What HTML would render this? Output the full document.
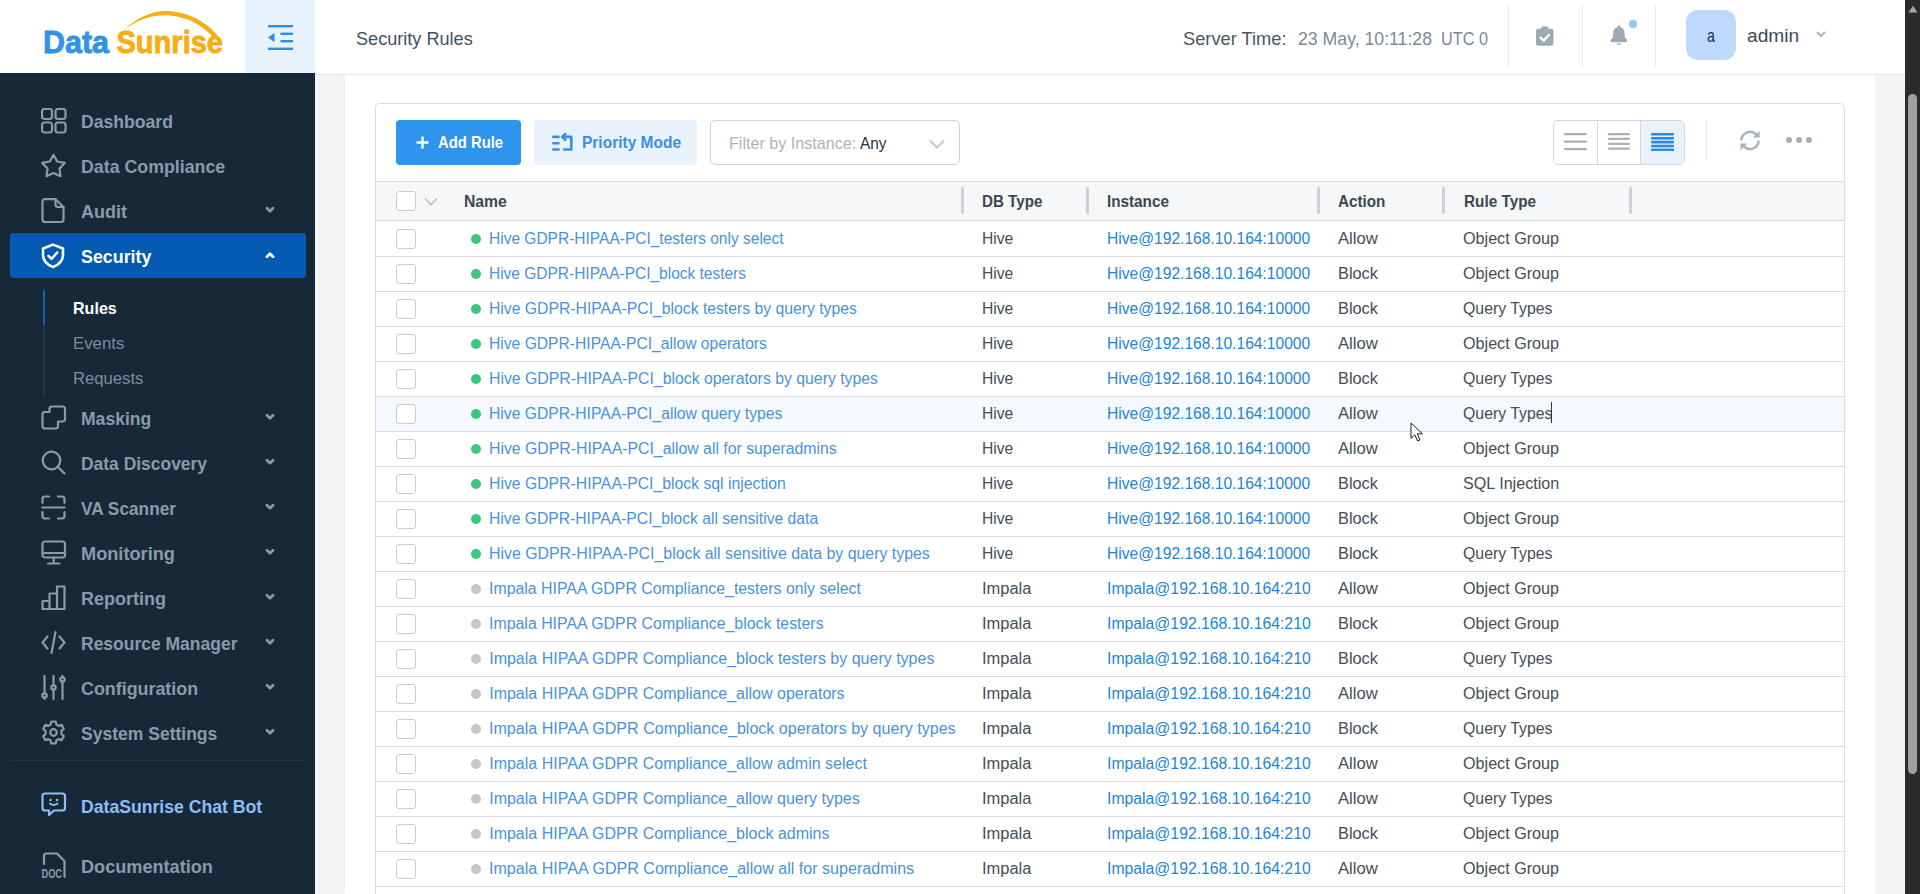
<!DOCTYPE html><html><head><meta charset="utf-8"><style>
*{box-sizing:border-box;margin:0;padding:0}
html,body{width:1920px;height:894px;overflow:hidden;background:#f3f5f7;font-family:"Liberation Sans", sans-serif}
.a{position:absolute;white-space:nowrap}
.cb{position:absolute;left:396px;width:20px;height:20px;border:1px solid #cbcbcb;border-radius:3px;background:#fff}
.dot{position:absolute;left:471px;width:10px;height:10px;border-radius:50%}
.ln{position:absolute;left:376px;width:1468px;height:1px;background:#d8dce2}
</style></head><body>
<div class="a" style="left:345px;top:74px;width:1530px;height:820px;background:#fff;box-shadow:-1px 0 3px rgba(0,0,0,0.04)"></div>
<div class="a" style="left:0;top:0;width:1905px;height:74px;background:#fff"></div>
<div class="a" style="left:315px;top:74px;width:1590px;height:1px;background:#e3e6e9"></div>
<svg style="position:absolute;left:30px;top:0px" width="240" height="73" viewBox="0 0 240 73" >
<text x="13" y="52.8" font-family="Liberation Sans" font-weight="bold" font-size="31.5" fill="#3192e6" stroke="#3192e6" stroke-width="0.9" textLength="66" lengthAdjust="spacingAndGlyphs">Data</text>
<text x="86.5" y="52.8" font-family="Liberation Sans" font-weight="bold" font-size="31.5" fill="#f9ad12" stroke="#f9ad12" stroke-width="0.9" textLength="106.5" lengthAdjust="spacingAndGlyphs">Sunrise</text>
<path d="M93.4 30.7 C 104 20, 120 11, 134.7 11 C 155 11, 175 20, 187.5 35.5 L 184.5 38.5 C 173 25, 155 15.2, 134.7 15.2 C 120 15.2, 105 21, 93.4 30.7 Z" fill="#f9ad12"/>
</svg>
<div class="a" style="left:245px;top:0;width:70px;height:73px;background:#e8f2fc"></div>
<svg style="position:absolute;left:268px;top:25px" width="25" height="25" viewBox="0 0 25 25" >
<rect x="0" y="0" width="25" height="2.4" fill="#2f8fe6"/>
<rect x="12.5" y="7.6" width="12.5" height="2.4" fill="#2f8fe6"/>
<rect x="12.5" y="15" width="12.5" height="2.4" fill="#2f8fe6"/>
<rect x="0" y="22.6" width="25" height="2.4" fill="#2f8fe6"/>
<path d="M0 12.5 L6.5 7.8 L6.5 17.2 Z" fill="#2f8fe6"/>
</svg>
<div class="a " style="left:355.80px;top:28.91px;font-size:19px;line-height:19px;color:#3f5163;transform:scaleX(0.9530);transform-origin:0 0;">Security Rules</div>
<div class="a " style="left:1182.90px;top:28.91px;font-size:19px;line-height:19px;color:#4b5763;transform:scaleX(0.9617);transform-origin:0 0;">Server Time:</div>
<div class="a " style="left:1298.00px;top:28.91px;font-size:19px;line-height:19px;color:#7d8996;transform:scaleX(0.9304);transform-origin:0 0;">23 May, 10:11:28</div>
<div class="a " style="left:1441.20px;top:28.91px;font-size:19px;line-height:19px;color:#7d8996;transform:scaleX(0.8559);transform-origin:0 0;">UTC 0</div>
<div class="a" style="left:1508px;top:4px;width:1px;height:64px;background:#e9ebee"></div>
<div class="a" style="left:1582px;top:4px;width:1px;height:64px;background:#e9ebee"></div>
<div class="a" style="left:1655px;top:4px;width:1px;height:64px;background:#e9ebee"></div>
<svg style="position:absolute;left:1536px;top:26px" width="18" height="20" viewBox="0 0 18 20" >
<rect x="0" y="2.8" width="17.5" height="17" rx="2.3" fill="#9ea9b4"/>
<rect x="5.2" y="0.2" width="7.2" height="5" rx="2.2" fill="#9ea9b4"/>
<path d="M4.6 11.6 L7.6 14.6 L12.9 9" fill="none" stroke="#fff" stroke-width="2.3" stroke-linecap="round" stroke-linejoin="round"/>
</svg>
<svg style="position:absolute;left:1610px;top:25px" width="18" height="21" viewBox="0 0 18 21" >
<circle cx="8.9" cy="1.6" r="1.4" fill="#9ea9b4"/>
<path d="M8.9 2 C 4.8 2, 3.3 5.2, 3.2 8.5 L 3 12 C 2.8 13.5, 0.5 14.2, 0.5 15.5 C 0.5 16.8, 1.5 17.2, 2.5 17.2 L 15.3 17.2 C 16.3 17.2, 17.3 16.8, 17.3 15.5 C 17.3 14.2, 15 13.5, 14.8 12 L 14.6 8.5 C 14.5 5.2, 13 2, 8.9 2 Z" fill="#9ea9b4"/>
<path d="M6.3 18.4 L11.5 18.4 Q 8.9 21.8 6.3 18.4 Z" fill="#9ea9b4"/>
</svg>
<div class="a" style="left:1629px;top:20px;width:8px;height:8px;border-radius:50%;background:#8ec6f7"></div>
<div class="a" style="left:1686px;top:10px;width:50px;height:50px;border-radius:12px;background:#bed9fc"></div>
<div class="a " style="left:1707.20px;top:25.91px;font-size:19px;line-height:19px;color:#152f52;transform:scaleX(0.7519);transform-origin:0 0;">a</div>
<div class="a " style="left:1747.00px;top:25.91px;font-size:19px;line-height:19px;color:#3a4a5a;transform:scaleX(1.0101);transform-origin:0 0;">admin</div>
<svg style="position:absolute;left:1816px;top:31px" width="10" height="7" viewBox="0 0 10 7" ><path d="M1 1 L5 5 L9 1" fill="none" stroke="#a9b3bd" stroke-width="2"/></svg>
<div class="a" style="left:0;top:73px;width:315px;height:821px;background:#172839"></div>
<svg style="position:absolute;left:40.5px;top:108px" width="26" height="26" viewBox="0 0 26 26" ><rect x="1" y="1" width="10" height="10" rx="2.5" fill="none" stroke="#8a9bab" stroke-width="2.2" stroke-linecap="round" stroke-linejoin="round"/><rect x="14.5" y="1" width="10" height="10" rx="2.5" fill="none" stroke="#8a9bab" stroke-width="2.2" stroke-linecap="round" stroke-linejoin="round"/><rect x="1" y="14.5" width="10" height="10" rx="2.5" fill="none" stroke="#8a9bab" stroke-width="2.2" stroke-linecap="round" stroke-linejoin="round"/><rect x="14.5" y="14.5" width="10" height="10" rx="2.5" fill="none" stroke="#8a9bab" stroke-width="2.2" stroke-linecap="round" stroke-linejoin="round"/></svg>
<div class="a " style="left:80.70px;top:111.91px;font-size:19px;line-height:19px;color:#8a9bab;font-weight:bold;transform:scaleX(0.9267);transform-origin:0 0;">Dashboard</div>
<svg style="position:absolute;left:40.5px;top:153px" width="26" height="26" viewBox="0 0 26 26" ><path d="M12.50 1.80 L16.20 8.50 L23.72 9.95 L18.49 15.55 L19.44 23.15 L12.50 19.90 L5.56 23.15 L6.51 15.55 L1.28 9.95 L8.80 8.50 Z" fill="none" stroke="#8a9bab" stroke-width="2.2" stroke-linecap="round" stroke-linejoin="round"/></svg>
<div class="a " style="left:80.70px;top:156.91px;font-size:19px;line-height:19px;color:#8a9bab;font-weight:bold;transform:scaleX(0.9352);transform-origin:0 0;">Data Compliance</div>
<svg style="position:absolute;left:40.5px;top:198px" width="26" height="26" viewBox="0 0 26 26" ><path d="M4 1.2 L14.5 1.2 L22.5 9 L22.5 21.5 Q22.5 24 20 24 L4 24 Q1.5 24 1.5 21.5 L1.5 3.7 Q1.5 1.2 4 1.2 Z" fill="none" stroke="#8a9bab" stroke-width="2.2" stroke-linecap="round" stroke-linejoin="round"/><path d="M14.5 1.2 L14.5 6.5 Q14.5 9 17 9 L22.5 9" fill="none" stroke="#8a9bab" stroke-width="2.2" stroke-linecap="round" stroke-linejoin="round"/></svg>
<div class="a " style="left:80.70px;top:201.91px;font-size:19px;line-height:19px;color:#8a9bab;font-weight:bold;transform:scaleX(0.9455);transform-origin:0 0;">Audit</div>
<svg style="position:absolute;left:265px;top:206px" width="10" height="8" viewBox="0 0 10 8" ><path d="M2 2.2 L5 5.2 L8 2.2" fill="none" stroke="#8a9bab" stroke-width="2.8" stroke-linecap="round" stroke-linejoin="round"/></svg>
<div class="a" style="left:10px;top:233px;width:296px;height:45px;background:#025bb0;border-radius:3px"></div>
<svg style="position:absolute;left:41.3px;top:243px" width="24" height="26" viewBox="0 0 24 26" ><path d="M12 1.6 L22 5.5 L22 12 Q22 20 12 24 Q2 20 2 12 L2 5.5 Z" fill="none" stroke="#fff" stroke-width="2.5" stroke-linejoin="round"/><path d="M7.5 12.8 L10.6 15.8 L16.2 9.5" fill="none" stroke="#fff" stroke-width="2.5" stroke-linecap="round" stroke-linejoin="round"/></svg>
<div class="a " style="left:80.80px;top:246.91px;font-size:19px;line-height:19px;color:#fff;font-weight:bold;transform:scaleX(0.9392);transform-origin:0 0;">Security</div>
<svg style="position:absolute;left:265px;top:251px" width="10" height="8" viewBox="0 0 10 8" ><path d="M2 5.8 L5 2.8 L8 5.8" fill="none" stroke="#fff" stroke-width="2.8" stroke-linecap="round" stroke-linejoin="round"/></svg>
<div class="a" style="left:43px;top:290px;width:2px;height:106px;background:#24384b"></div>
<div class="a" style="left:43px;top:290px;width:2px;height:35px;background:#1661ad"></div>
<div class="a " style="left:73.20px;top:299.60px;font-size:17px;line-height:17px;color:#fff;font-weight:bold;transform:scaleX(0.9455);transform-origin:0 0;">Rules</div>
<div class="a " style="left:73.20px;top:334.60px;font-size:17px;line-height:17px;color:#7d8e9f;transform:scaleX(0.9878);transform-origin:0 0;">Events</div>
<div class="a " style="left:73.20px;top:369.60px;font-size:17px;line-height:17px;color:#7d8e9f;transform:scaleX(0.9802);transform-origin:0 0;">Requests</div>
<svg style="position:absolute;left:40.5px;top:405px" width="26" height="26" viewBox="0 0 26 26" ><path d="M8.5 7 L8.5 4 Q8.5 1.5 11 1.5 L21.5 1.5 Q24 1.5 24 4 L24 14 Q24 16.5 21.5 16.5 L17 16.5 L17 21 Q17 23.5 14.5 23.5 L4 23.5 Q1.5 23.5 1.5 21 L1.5 9.5 Q1.5 7 4 7 Z" fill="none" stroke="#8a9bab" stroke-width="2.2" stroke-linecap="round" stroke-linejoin="round"/></svg>
<div class="a " style="left:80.70px;top:408.91px;font-size:19px;line-height:19px;color:#8a9bab;font-weight:bold;transform:scaleX(0.9237);transform-origin:0 0;">Masking</div>
<svg style="position:absolute;left:265px;top:413px" width="10" height="8" viewBox="0 0 10 8" ><path d="M2 2.2 L5 5.2 L8 2.2" fill="none" stroke="#8a9bab" stroke-width="2.8" stroke-linecap="round" stroke-linejoin="round"/></svg>
<svg style="position:absolute;left:40.5px;top:450px" width="26" height="26" viewBox="0 0 26 26" ><circle cx="10.5" cy="10.5" r="8.8" fill="none" stroke="#8a9bab" stroke-width="2.2" stroke-linecap="round" stroke-linejoin="round"/><path d="M17 17 L23.5 23.5" fill="none" stroke="#8a9bab" stroke-width="2.2" stroke-linecap="round" stroke-linejoin="round"/></svg>
<div class="a " style="left:80.70px;top:453.91px;font-size:19px;line-height:19px;color:#8a9bab;font-weight:bold;transform:scaleX(0.9179);transform-origin:0 0;">Data Discovery</div>
<svg style="position:absolute;left:265px;top:458px" width="10" height="8" viewBox="0 0 10 8" ><path d="M2 2.2 L5 5.2 L8 2.2" fill="none" stroke="#8a9bab" stroke-width="2.8" stroke-linecap="round" stroke-linejoin="round"/></svg>
<svg style="position:absolute;left:40.5px;top:495px" width="26" height="26" viewBox="0 0 26 26" ><path d="M1.5 8 L1.5 4 Q1.5 1.5 4 1.5 L8 1.5 M17 1.5 L21 1.5 Q23.5 1.5 23.5 4 L23.5 8 M23.5 17 L23.5 21 Q23.5 23.5 21 23.5 L17 23.5 M8 23.5 L4 23.5 Q1.5 23.5 1.5 21 L1.5 17 M1.5 12.5 L23.5 12.5" fill="none" stroke="#8a9bab" stroke-width="2.2" stroke-linecap="round" stroke-linejoin="round"/></svg>
<div class="a " style="left:80.70px;top:498.91px;font-size:19px;line-height:19px;color:#8a9bab;font-weight:bold;transform:scaleX(0.9091);transform-origin:0 0;">VA Scanner</div>
<svg style="position:absolute;left:265px;top:503px" width="10" height="8" viewBox="0 0 10 8" ><path d="M2 2.2 L5 5.2 L8 2.2" fill="none" stroke="#8a9bab" stroke-width="2.8" stroke-linecap="round" stroke-linejoin="round"/></svg>
<svg style="position:absolute;left:40.5px;top:540px" width="26" height="26" viewBox="0 0 26 26" ><rect x="1.5" y="1.5" width="22.5" height="16" rx="2.5" fill="none" stroke="#8a9bab" stroke-width="2.2" stroke-linecap="round" stroke-linejoin="round"/><path d="M1.5 13 L24 13 M12.7 17.5 L12.7 23 M7 23.5 L18.5 23.5" fill="none" stroke="#8a9bab" stroke-width="2.2" stroke-linecap="round" stroke-linejoin="round"/></svg>
<div class="a " style="left:80.70px;top:543.91px;font-size:19px;line-height:19px;color:#8a9bab;font-weight:bold;transform:scaleX(0.9568);transform-origin:0 0;">Monitoring</div>
<svg style="position:absolute;left:265px;top:548px" width="10" height="8" viewBox="0 0 10 8" ><path d="M2 2.2 L5 5.2 L8 2.2" fill="none" stroke="#8a9bab" stroke-width="2.8" stroke-linecap="round" stroke-linejoin="round"/></svg>
<svg style="position:absolute;left:40.5px;top:585px" width="26" height="26" viewBox="0 0 26 26" ><path d="M1.5 24 L1.5 16 L8.5 16 L8.5 24 Z M8.5 24 L8.5 8.5 L16 8.5 L16 24 M16 24 L16 1.5 L23.5 1.5 L23.5 24 L1.5 24" fill="none" stroke="#8a9bab" stroke-width="2.2" stroke-linecap="round" stroke-linejoin="round"/></svg>
<div class="a " style="left:80.70px;top:588.91px;font-size:19px;line-height:19px;color:#8a9bab;font-weight:bold;transform:scaleX(0.9467);transform-origin:0 0;">Reporting</div>
<svg style="position:absolute;left:265px;top:593px" width="10" height="8" viewBox="0 0 10 8" ><path d="M2 2.2 L5 5.2 L8 2.2" fill="none" stroke="#8a9bab" stroke-width="2.8" stroke-linecap="round" stroke-linejoin="round"/></svg>
<svg style="position:absolute;left:40.5px;top:630px" width="26" height="26" viewBox="0 0 26 26" ><path d="M6.5 6.5 L1.5 12.5 L6.5 18.5 M18.5 6.5 L23.5 12.5 L18.5 18.5 M14.5 2 L10.5 23" fill="none" stroke="#8a9bab" stroke-width="2.2" stroke-linecap="round" stroke-linejoin="round"/></svg>
<div class="a " style="left:80.70px;top:633.91px;font-size:19px;line-height:19px;color:#8a9bab;font-weight:bold;transform:scaleX(0.9203);transform-origin:0 0;">Resource Manager</div>
<svg style="position:absolute;left:265px;top:638px" width="10" height="8" viewBox="0 0 10 8" ><path d="M2 2.2 L5 5.2 L8 2.2" fill="none" stroke="#8a9bab" stroke-width="2.8" stroke-linecap="round" stroke-linejoin="round"/></svg>
<svg style="position:absolute;left:40.5px;top:675px" width="26" height="26" viewBox="0 0 26 26" ><path d="M3.5 1 L3.5 18.5 M3.5 22.5 L3.5 24 M12.5 1 L12.5 10.5 M12.5 14.5 L12.5 24 M21.5 1 L21.5 2.5 M21.5 6.5 L21.5 24" fill="none" stroke="#8a9bab" stroke-width="2.2" stroke-linecap="round" stroke-linejoin="round"/><circle cx="3.5" cy="20.5" r="2.2" fill="none" stroke="#8a9bab" stroke-width="2.2" stroke-linecap="round" stroke-linejoin="round"/><circle cx="12.5" cy="12.5" r="2.2" fill="none" stroke="#8a9bab" stroke-width="2.2" stroke-linecap="round" stroke-linejoin="round"/><circle cx="21.5" cy="4.5" r="2.2" fill="none" stroke="#8a9bab" stroke-width="2.2" stroke-linecap="round" stroke-linejoin="round"/></svg>
<div class="a " style="left:80.70px;top:678.91px;font-size:19px;line-height:19px;color:#8a9bab;font-weight:bold;transform:scaleX(0.9402);transform-origin:0 0;">Configuration</div>
<svg style="position:absolute;left:265px;top:683px" width="10" height="8" viewBox="0 0 10 8" ><path d="M2 2.2 L5 5.2 L8 2.2" fill="none" stroke="#8a9bab" stroke-width="2.8" stroke-linecap="round" stroke-linejoin="round"/></svg>
<svg style="position:absolute;left:40.5px;top:720px" width="26" height="26" viewBox="0 0 26 26" ><path d="M10.3 1.5 L14.7 1.5 L15.4 4.6 L17.6 5.9 L20.6 4.9 L22.8 8.7 L20.5 10.9 L20.5 14.1 L22.8 16.3 L20.6 20.1 L17.6 19.1 L15.4 20.4 L14.7 23.5 L10.3 23.5 L9.6 20.4 L7.4 19.1 L4.4 20.1 L2.2 16.3 L4.5 14.1 L4.5 10.9 L2.2 8.7 L4.4 4.9 L7.4 5.9 L9.6 4.6 Z" fill="none" stroke="#8a9bab" stroke-width="2.2" stroke-linecap="round" stroke-linejoin="round"/><circle cx="12.5" cy="12.5" r="3.3" fill="none" stroke="#8a9bab" stroke-width="2.2" stroke-linecap="round" stroke-linejoin="round"/></svg>
<div class="a " style="left:80.70px;top:723.91px;font-size:19px;line-height:19px;color:#8a9bab;font-weight:bold;transform:scaleX(0.9221);transform-origin:0 0;">System Settings</div>
<svg style="position:absolute;left:265px;top:728px" width="10" height="8" viewBox="0 0 10 8" ><path d="M2 2.2 L5 5.2 L8 2.2" fill="none" stroke="#8a9bab" stroke-width="2.8" stroke-linecap="round" stroke-linejoin="round"/></svg>
<div class="a" style="left:10px;top:760px;width:295px;height:1px;background:#25384b"></div>
<svg style="position:absolute;left:40.5px;top:792px" width="26" height="26" viewBox="0 0 26 26" ><path d="M4 1.5 L21.5 1.5 Q24 1.5 24 4 L24 16 Q24 18.5 21.5 18.5 L13 18.5 L8 23 L8 18.5 L4 18.5 Q1.5 18.5 1.5 16 L1.5 4 Q1.5 1.5 4 1.5 Z" fill="none" stroke="#8fbdf5" stroke-width="2.2" stroke-linejoin="round"/><circle cx="9.5" cy="8" r="1.2" fill="#8fbdf5"/><circle cx="16" cy="8" r="1.2" fill="#8fbdf5"/><path d="M9 11.5 Q12.7 14.5 16.5 11.5" fill="none" stroke="#8fbdf5" stroke-width="1.8" stroke-linecap="round"/></svg>
<div class="a " style="left:80.70px;top:796.91px;font-size:19px;line-height:19px;color:#8fbdf5;font-weight:bold;transform:scaleX(0.9277);transform-origin:0 0;">DataSunrise Chat Bot</div>
<svg style="position:absolute;left:40.5px;top:852px" width="26" height="27" viewBox="0 0 26 27" ><path d="M3 12 L3 4 Q3 1.5 5.5 1.5 L16 1.5 L23.5 9 L23.5 25" fill="none" stroke="#8a9bab" stroke-width="2.2" stroke-linecap="round" stroke-linejoin="round"/><text x="0.5" y="25.5" font-family="Liberation Sans" font-weight="bold" font-size="12" fill="#8a9bab" textLength="20.5" lengthAdjust="spacingAndGlyphs">DOC</text></svg>
<div class="a " style="left:80.70px;top:856.91px;font-size:19px;line-height:19px;color:#8a9bab;font-weight:bold;transform:scaleX(0.9536);transform-origin:0 0;">Documentation</div>
<div class="a" style="left:375px;top:103px;width:1470px;height:900px;border:1px solid #dadde1;border-radius:5px;background:#fff"></div>
<div class="a" style="left:396px;top:120px;width:125px;height:45px;background:#2f94ee;border-radius:4px"></div>
<svg style="position:absolute;left:415.5px;top:135.5px" width="14" height="14" viewBox="0 0 14 14" ><path d="M6.5 0.5 L6.5 12.5 M0.5 6.5 L12.5 6.5" stroke="#fff" stroke-width="2.4"/></svg>
<div class="a " style="left:437.90px;top:133.60px;font-size:17px;line-height:17px;color:#fff;font-weight:bold;transform:scaleX(0.8723);transform-origin:0 0;">Add Rule</div>
<div class="a" style="left:534px;top:120px;width:163px;height:45px;background:#e8f2fc;border-radius:4px"></div>
<svg style="position:absolute;left:551.5px;top:133px" width="21" height="19" viewBox="0 0 21 19" ><path d="M1.3 3.9 L6.5 3.9 M1.3 10.2 L6.5 10.2 M1.3 16.5 L6.5 16.5" stroke="#3a8fe0" stroke-width="2.6" stroke-linecap="round"/><path d="M11.5 3.9 L19.3 3.9 L19.3 16.5 L12.3 16.5" fill="none" stroke="#3a8fe0" stroke-width="2.6" stroke-linecap="round" stroke-linejoin="round"/><path d="M13.2 1 L10.3 3.9 L13.2 6.8" fill="none" stroke="#3a8fe0" stroke-width="2.6" stroke-linecap="round" stroke-linejoin="round"/></svg>
<div class="a " style="left:581.80px;top:133.60px;font-size:17px;line-height:17px;color:#3a8fe0;font-weight:bold;transform:scaleX(0.9114);transform-origin:0 0;">Priority Mode</div>
<div class="a" style="left:710px;top:120px;width:250px;height:45px;border:1px solid #cfd3d7;border-radius:5px"></div>
<div class="a " style="left:729.20px;top:134.60px;font-size:17px;line-height:17px;color:#a9b5be;transform:scaleX(0.9476);transform-origin:0 0;">Filter by Instance:</div>
<div class="a " style="left:860.40px;top:134.60px;font-size:17px;line-height:17px;color:#27323c;transform:scaleX(0.9071);transform-origin:0 0;">Any</div>
<svg style="position:absolute;left:929px;top:139px" width="16" height="10" viewBox="0 0 16 10" ><path d="M1 1.5 L8 8.5 L15 1.5" fill="none" stroke="#c3c8cd" stroke-width="2"/></svg>
<div class="a" style="left:1553px;top:120px;width:132px;height:45px;border:1px solid #d3d7db;border-radius:5px;overflow:hidden"><div class="a" style="left:87px;top:0;width:44px;height:43px;background:#e8f2fc"></div><div class="a" style="left:43px;top:0;width:1px;height:43px;background:#d3d7db"></div><div class="a" style="left:86px;top:0;width:1px;height:43px;background:#d3d7db"></div></div>
<svg style="position:absolute;left:1564px;top:133px" width="24" height="18" viewBox="0 0 24 18" ><rect x="0" y="0" width="23" height="2.2" rx="1" fill="#a9b1b8"/><rect x="0" y="7.5" width="23" height="2.2" rx="1" fill="#a9b1b8"/><rect x="0" y="15" width="23" height="2.2" rx="1" fill="#a9b1b8"/></svg>
<svg style="position:absolute;left:1608px;top:133px" width="24" height="18" viewBox="0 0 24 18" ><rect x="0" y="0" width="22" height="2.2" rx="1" fill="#a9b1b8"/><rect x="0" y="4.8" width="22" height="2.2" rx="1" fill="#a9b1b8"/><rect x="0" y="9.7" width="22" height="2.2" rx="1" fill="#a9b1b8"/><rect x="0" y="14.5" width="22" height="2.2" rx="1" fill="#a9b1b8"/></svg>
<svg style="position:absolute;left:1651px;top:133px" width="24" height="18" viewBox="0 0 24 18" ><rect x="0" y="0.0" width="23" height="2.6" rx="0.8" fill="#2b8be3"/><rect x="0" y="3.9" width="23" height="2.6" rx="0.8" fill="#2b8be3"/><rect x="0" y="7.8" width="23" height="2.6" rx="0.8" fill="#2b8be3"/><rect x="0" y="11.7" width="23" height="2.6" rx="0.8" fill="#2b8be3"/><rect x="0" y="15.6" width="23" height="2.6" rx="0.8" fill="#2b8be3"/></svg>
<div class="a" style="left:1706px;top:120px;width:1px;height:40px;background:#e6e9ec"></div>
<svg style="position:absolute;left:1740px;top:129.5px" width="21" height="21" viewBox="0 0 21 21" ><path d="M1.4 10.5 A8.6 8.6 0 0 1 16.2 4.6 M18.6 10.5 A8.6 8.6 0 0 1 3.8 16.4" fill="none" stroke="#a9b4ba" stroke-width="2.5"/><path d="M19.6 0.8 L19.6 7.6 L12.8 7.6 Z" fill="#a9b4ba"/><path d="M0.4 20.2 L0.4 13.4 L7.2 13.4 Z" fill="#a9b4ba"/></svg>
<div class="a" style="left:1786px;top:137px;width:6px;height:6px;border-radius:50%;background:#a3aeb5"></div>
<div class="a" style="left:1796px;top:137px;width:6px;height:6px;border-radius:50%;background:#a3aeb5"></div>
<div class="a" style="left:1806px;top:137px;width:6px;height:6px;border-radius:50%;background:#a3aeb5"></div>
<div class="a" style="left:376px;top:181px;width:1468px;height:40px;background:#f5f7f9;border-top:1px solid #dadde1;border-bottom:1px solid #d6dae0"></div>
<div class="cb" style="top:191px"></div>
<svg style="position:absolute;left:424px;top:197px" width="16" height="10" viewBox="0 0 16 10" ><path d="M1 1.5 L7 7.5 L13 1.5" fill="none" stroke="#b9c0c7" stroke-width="1.6"/></svg>
<div class="a " style="left:464.20px;top:194.45px;font-size:16px;line-height:16px;color:#3b4651;font-weight:bold;transform:scaleX(0.9817);transform-origin:0 0;">Name</div>
<div class="a " style="left:981.90px;top:194.45px;font-size:16px;line-height:16px;color:#3b4651;font-weight:bold;transform:scaleX(0.9469);transform-origin:0 0;">DB Type</div>
<div class="a " style="left:1106.90px;top:194.45px;font-size:16px;line-height:16px;color:#3b4651;font-weight:bold;transform:scaleX(0.9533);transform-origin:0 0;">Instance</div>
<div class="a " style="left:1337.50px;top:194.45px;font-size:16px;line-height:16px;color:#3b4651;font-weight:bold;transform:scaleX(0.9506);transform-origin:0 0;">Action</div>
<div class="a " style="left:1463.50px;top:194.45px;font-size:16px;line-height:16px;color:#3b4651;font-weight:bold;transform:scaleX(0.9578);transform-origin:0 0;">Rule Type</div>
<div class="a" style="left:961px;top:187px;width:3px;height:27px;background:#c9d0d9;border-radius:1px"></div>
<div class="a" style="left:1086px;top:187px;width:3px;height:27px;background:#c9d0d9;border-radius:1px"></div>
<div class="a" style="left:1317px;top:187px;width:3px;height:27px;background:#c9d0d9;border-radius:1px"></div>
<div class="a" style="left:1442px;top:187px;width:3px;height:27px;background:#c9d0d9;border-radius:1px"></div>
<div class="a" style="left:1629px;top:187px;width:3px;height:27px;background:#c9d0d9;border-radius:1px"></div>
<div class="a" style="left:376px;top:396px;width:1468px;height:35px;background:#f5f8fc"></div>
<div class="ln" style="top:256px"></div>
<div class="cb" style="top:229px"></div>
<div class="dot" style="top:234px;background:#3ec67e"></div>
<div class="a " style="left:489.20px;top:231.45px;font-size:16px;line-height:16px;color:#4a92dc;transform:scaleX(0.9695);transform-origin:0 0;">Hive GDPR-HIPAA-PCI_testers only select</div>
<div class="a " style="left:981.90px;top:231.45px;font-size:16px;line-height:16px;color:#464d55;transform:scaleX(0.9781);transform-origin:0 0;">Hive</div>
<div class="a " style="left:1106.50px;top:231.45px;font-size:16px;line-height:16px;color:#1f84d6;transform:scaleX(0.9750);transform-origin:0 0;">Hive@192.168.10.164:10000</div>
<div class="a " style="left:1337.50px;top:231.45px;font-size:16px;line-height:16px;color:#464d55;transform:scaleX(1.0386);transform-origin:0 0;">Allow</div>
<div class="a " style="left:1462.80px;top:231.45px;font-size:16px;line-height:16px;color:#464d55;transform:scaleX(1.0093);transform-origin:0 0;">Object Group</div>
<div class="ln" style="top:291px"></div>
<div class="cb" style="top:264px"></div>
<div class="dot" style="top:269px;background:#3ec67e"></div>
<div class="a " style="left:489.20px;top:266.45px;font-size:16px;line-height:16px;color:#4a92dc;transform:scaleX(0.9679);transform-origin:0 0;">Hive GDPR-HIPAA-PCI_block testers</div>
<div class="a " style="left:981.90px;top:266.45px;font-size:16px;line-height:16px;color:#464d55;transform:scaleX(0.9781);transform-origin:0 0;">Hive</div>
<div class="a " style="left:1106.50px;top:266.45px;font-size:16px;line-height:16px;color:#1f84d6;transform:scaleX(0.9750);transform-origin:0 0;">Hive@192.168.10.164:10000</div>
<div class="a " style="left:1338.00px;top:266.45px;font-size:16px;line-height:16px;color:#464d55;transform:scaleX(1.0204);transform-origin:0 0;">Block</div>
<div class="a " style="left:1462.80px;top:266.45px;font-size:16px;line-height:16px;color:#464d55;transform:scaleX(1.0093);transform-origin:0 0;">Object Group</div>
<div class="ln" style="top:326px"></div>
<div class="cb" style="top:299px"></div>
<div class="dot" style="top:304px;background:#3ec67e"></div>
<div class="a " style="left:489.20px;top:301.45px;font-size:16px;line-height:16px;color:#4a92dc;transform:scaleX(0.9832);transform-origin:0 0;">Hive GDPR-HIPAA-PCI_block testers by query types</div>
<div class="a " style="left:981.90px;top:301.45px;font-size:16px;line-height:16px;color:#464d55;transform:scaleX(0.9781);transform-origin:0 0;">Hive</div>
<div class="a " style="left:1106.50px;top:301.45px;font-size:16px;line-height:16px;color:#1f84d6;transform:scaleX(0.9750);transform-origin:0 0;">Hive@192.168.10.164:10000</div>
<div class="a " style="left:1338.00px;top:301.45px;font-size:16px;line-height:16px;color:#464d55;transform:scaleX(1.0204);transform-origin:0 0;">Block</div>
<div class="a " style="left:1462.80px;top:301.45px;font-size:16px;line-height:16px;color:#464d55;transform:scaleX(0.9900);transform-origin:0 0;">Query Types</div>
<div class="ln" style="top:361px"></div>
<div class="cb" style="top:334px"></div>
<div class="dot" style="top:339px;background:#3ec67e"></div>
<div class="a " style="left:489.20px;top:336.45px;font-size:16px;line-height:16px;color:#4a92dc;transform:scaleX(0.9777);transform-origin:0 0;">Hive GDPR-HIPAA-PCI_allow operators</div>
<div class="a " style="left:981.90px;top:336.45px;font-size:16px;line-height:16px;color:#464d55;transform:scaleX(0.9781);transform-origin:0 0;">Hive</div>
<div class="a " style="left:1106.50px;top:336.45px;font-size:16px;line-height:16px;color:#1f84d6;transform:scaleX(0.9750);transform-origin:0 0;">Hive@192.168.10.164:10000</div>
<div class="a " style="left:1337.50px;top:336.45px;font-size:16px;line-height:16px;color:#464d55;transform:scaleX(1.0386);transform-origin:0 0;">Allow</div>
<div class="a " style="left:1462.80px;top:336.45px;font-size:16px;line-height:16px;color:#464d55;transform:scaleX(1.0093);transform-origin:0 0;">Object Group</div>
<div class="ln" style="top:396px"></div>
<div class="cb" style="top:369px"></div>
<div class="dot" style="top:374px;background:#3ec67e"></div>
<div class="a " style="left:489.20px;top:371.45px;font-size:16px;line-height:16px;color:#4a92dc;transform:scaleX(0.9883);transform-origin:0 0;">Hive GDPR-HIPAA-PCI_block operators by query types</div>
<div class="a " style="left:981.90px;top:371.45px;font-size:16px;line-height:16px;color:#464d55;transform:scaleX(0.9781);transform-origin:0 0;">Hive</div>
<div class="a " style="left:1106.50px;top:371.45px;font-size:16px;line-height:16px;color:#1f84d6;transform:scaleX(0.9750);transform-origin:0 0;">Hive@192.168.10.164:10000</div>
<div class="a " style="left:1338.00px;top:371.45px;font-size:16px;line-height:16px;color:#464d55;transform:scaleX(1.0204);transform-origin:0 0;">Block</div>
<div class="a " style="left:1462.80px;top:371.45px;font-size:16px;line-height:16px;color:#464d55;transform:scaleX(0.9900);transform-origin:0 0;">Query Types</div>
<div class="ln" style="top:431px"></div>
<div class="cb" style="top:404px"></div>
<div class="dot" style="top:409px;background:#3ec67e"></div>
<div class="a " style="left:489.20px;top:406.45px;font-size:16px;line-height:16px;color:#4a92dc;transform:scaleX(0.9798);transform-origin:0 0;">Hive GDPR-HIPAA-PCI_allow query types</div>
<div class="a " style="left:981.90px;top:406.45px;font-size:16px;line-height:16px;color:#464d55;transform:scaleX(0.9781);transform-origin:0 0;">Hive</div>
<div class="a " style="left:1106.50px;top:406.45px;font-size:16px;line-height:16px;color:#1f84d6;transform:scaleX(0.9750);transform-origin:0 0;">Hive@192.168.10.164:10000</div>
<div class="a " style="left:1337.50px;top:406.45px;font-size:16px;line-height:16px;color:#464d55;transform:scaleX(1.0386);transform-origin:0 0;">Allow</div>
<div class="a " style="left:1462.80px;top:406.45px;font-size:16px;line-height:16px;color:#464d55;transform:scaleX(0.9900);transform-origin:0 0;">Query Types</div>
<div class="ln" style="top:466px"></div>
<div class="cb" style="top:439px"></div>
<div class="dot" style="top:444px;background:#3ec67e"></div>
<div class="a " style="left:489.20px;top:441.45px;font-size:16px;line-height:16px;color:#4a92dc;transform:scaleX(0.9882);transform-origin:0 0;">Hive GDPR-HIPAA-PCI_allow all for superadmins</div>
<div class="a " style="left:981.90px;top:441.45px;font-size:16px;line-height:16px;color:#464d55;transform:scaleX(0.9781);transform-origin:0 0;">Hive</div>
<div class="a " style="left:1106.50px;top:441.45px;font-size:16px;line-height:16px;color:#1f84d6;transform:scaleX(0.9750);transform-origin:0 0;">Hive@192.168.10.164:10000</div>
<div class="a " style="left:1337.50px;top:441.45px;font-size:16px;line-height:16px;color:#464d55;transform:scaleX(1.0386);transform-origin:0 0;">Allow</div>
<div class="a " style="left:1462.80px;top:441.45px;font-size:16px;line-height:16px;color:#464d55;transform:scaleX(1.0093);transform-origin:0 0;">Object Group</div>
<div class="ln" style="top:501px"></div>
<div class="cb" style="top:474px"></div>
<div class="dot" style="top:479px;background:#3ec67e"></div>
<div class="a " style="left:489.20px;top:476.45px;font-size:16px;line-height:16px;color:#4a92dc;transform:scaleX(0.9857);transform-origin:0 0;">Hive GDPR-HIPAA-PCI_block sql injection</div>
<div class="a " style="left:981.90px;top:476.45px;font-size:16px;line-height:16px;color:#464d55;transform:scaleX(0.9781);transform-origin:0 0;">Hive</div>
<div class="a " style="left:1106.50px;top:476.45px;font-size:16px;line-height:16px;color:#1f84d6;transform:scaleX(0.9750);transform-origin:0 0;">Hive@192.168.10.164:10000</div>
<div class="a " style="left:1338.00px;top:476.45px;font-size:16px;line-height:16px;color:#464d55;transform:scaleX(1.0204);transform-origin:0 0;">Block</div>
<div class="a " style="left:1462.80px;top:476.45px;font-size:16px;line-height:16px;color:#464d55;transform:scaleX(1.0080);transform-origin:0 0;">SQL Injection</div>
<div class="ln" style="top:536px"></div>
<div class="cb" style="top:509px"></div>
<div class="dot" style="top:514px;background:#3ec67e"></div>
<div class="a " style="left:489.20px;top:511.45px;font-size:16px;line-height:16px;color:#4a92dc;transform:scaleX(0.9800);transform-origin:0 0;">Hive GDPR-HIPAA-PCI_block all sensitive data</div>
<div class="a " style="left:981.90px;top:511.45px;font-size:16px;line-height:16px;color:#464d55;transform:scaleX(0.9781);transform-origin:0 0;">Hive</div>
<div class="a " style="left:1106.50px;top:511.45px;font-size:16px;line-height:16px;color:#1f84d6;transform:scaleX(0.9750);transform-origin:0 0;">Hive@192.168.10.164:10000</div>
<div class="a " style="left:1338.00px;top:511.45px;font-size:16px;line-height:16px;color:#464d55;transform:scaleX(1.0204);transform-origin:0 0;">Block</div>
<div class="a " style="left:1462.80px;top:511.45px;font-size:16px;line-height:16px;color:#464d55;transform:scaleX(1.0093);transform-origin:0 0;">Object Group</div>
<div class="ln" style="top:571px"></div>
<div class="cb" style="top:544px"></div>
<div class="dot" style="top:549px;background:#3ec67e"></div>
<div class="a " style="left:489.20px;top:546.45px;font-size:16px;line-height:16px;color:#4a92dc;transform:scaleX(0.9919);transform-origin:0 0;">Hive GDPR-HIPAA-PCI_block all sensitive data by query types</div>
<div class="a " style="left:981.90px;top:546.45px;font-size:16px;line-height:16px;color:#464d55;transform:scaleX(0.9781);transform-origin:0 0;">Hive</div>
<div class="a " style="left:1106.50px;top:546.45px;font-size:16px;line-height:16px;color:#1f84d6;transform:scaleX(0.9750);transform-origin:0 0;">Hive@192.168.10.164:10000</div>
<div class="a " style="left:1338.00px;top:546.45px;font-size:16px;line-height:16px;color:#464d55;transform:scaleX(1.0204);transform-origin:0 0;">Block</div>
<div class="a " style="left:1462.80px;top:546.45px;font-size:16px;line-height:16px;color:#464d55;transform:scaleX(0.9900);transform-origin:0 0;">Query Types</div>
<div class="ln" style="top:606px"></div>
<div class="cb" style="top:579px"></div>
<div class="dot" style="top:584px;background:#c4c7cc"></div>
<div class="a " style="left:489.20px;top:581.45px;font-size:16px;line-height:16px;color:#4a92dc;transform:scaleX(0.9918);transform-origin:0 0;">Impala HIPAA GDPR Compliance_testers only select</div>
<div class="a " style="left:981.90px;top:581.45px;font-size:16px;line-height:16px;color:#464d55;transform:scaleX(1.0295);transform-origin:0 0;">Impala</div>
<div class="a" style="left:1100px;top:571px;width:211px;height:35px;overflow:hidden"><div class="a " style="left:6.50px;top:10.45px;font-size:16px;line-height:16px;color:#1f84d6;transform:scaleX(0.9858);transform-origin:0 0;">Impala@192.168.10.164:210</div></div>
<div class="a " style="left:1337.50px;top:581.45px;font-size:16px;line-height:16px;color:#464d55;transform:scaleX(1.0386);transform-origin:0 0;">Allow</div>
<div class="a " style="left:1462.80px;top:581.45px;font-size:16px;line-height:16px;color:#464d55;transform:scaleX(1.0093);transform-origin:0 0;">Object Group</div>
<div class="ln" style="top:641px"></div>
<div class="cb" style="top:614px"></div>
<div class="dot" style="top:619px;background:#c4c7cc"></div>
<div class="a " style="left:489.20px;top:616.45px;font-size:16px;line-height:16px;color:#4a92dc;transform:scaleX(0.9937);transform-origin:0 0;">Impala HIPAA GDPR Compliance_block testers</div>
<div class="a " style="left:981.90px;top:616.45px;font-size:16px;line-height:16px;color:#464d55;transform:scaleX(1.0295);transform-origin:0 0;">Impala</div>
<div class="a" style="left:1100px;top:606px;width:211px;height:35px;overflow:hidden"><div class="a " style="left:6.50px;top:10.45px;font-size:16px;line-height:16px;color:#1f84d6;transform:scaleX(0.9858);transform-origin:0 0;">Impala@192.168.10.164:210</div></div>
<div class="a " style="left:1338.00px;top:616.45px;font-size:16px;line-height:16px;color:#464d55;transform:scaleX(1.0204);transform-origin:0 0;">Block</div>
<div class="a " style="left:1462.80px;top:616.45px;font-size:16px;line-height:16px;color:#464d55;transform:scaleX(1.0093);transform-origin:0 0;">Object Group</div>
<div class="ln" style="top:676px"></div>
<div class="cb" style="top:649px"></div>
<div class="dot" style="top:654px;background:#c4c7cc"></div>
<div class="a " style="left:489.20px;top:651.45px;font-size:16px;line-height:16px;color:#4a92dc;">Impala HIPAA GDPR Compliance_block testers by query types</div>
<div class="a " style="left:981.90px;top:651.45px;font-size:16px;line-height:16px;color:#464d55;transform:scaleX(1.0295);transform-origin:0 0;">Impala</div>
<div class="a" style="left:1100px;top:641px;width:211px;height:35px;overflow:hidden"><div class="a " style="left:6.50px;top:10.45px;font-size:16px;line-height:16px;color:#1f84d6;transform:scaleX(0.9858);transform-origin:0 0;">Impala@192.168.10.164:210</div></div>
<div class="a " style="left:1338.00px;top:651.45px;font-size:16px;line-height:16px;color:#464d55;transform:scaleX(1.0204);transform-origin:0 0;">Block</div>
<div class="a " style="left:1462.80px;top:651.45px;font-size:16px;line-height:16px;color:#464d55;transform:scaleX(0.9900);transform-origin:0 0;">Query Types</div>
<div class="ln" style="top:711px"></div>
<div class="cb" style="top:684px"></div>
<div class="dot" style="top:689px;background:#c4c7cc"></div>
<div class="a " style="left:489.20px;top:686.45px;font-size:16px;line-height:16px;color:#4a92dc;">Impala HIPAA GDPR Compliance_allow operators</div>
<div class="a " style="left:981.90px;top:686.45px;font-size:16px;line-height:16px;color:#464d55;transform:scaleX(1.0295);transform-origin:0 0;">Impala</div>
<div class="a" style="left:1100px;top:676px;width:211px;height:35px;overflow:hidden"><div class="a " style="left:6.50px;top:10.45px;font-size:16px;line-height:16px;color:#1f84d6;transform:scaleX(0.9858);transform-origin:0 0;">Impala@192.168.10.164:210</div></div>
<div class="a " style="left:1337.50px;top:686.45px;font-size:16px;line-height:16px;color:#464d55;transform:scaleX(1.0386);transform-origin:0 0;">Allow</div>
<div class="a " style="left:1462.80px;top:686.45px;font-size:16px;line-height:16px;color:#464d55;transform:scaleX(1.0093);transform-origin:0 0;">Object Group</div>
<div class="ln" style="top:746px"></div>
<div class="cb" style="top:719px"></div>
<div class="dot" style="top:724px;background:#c4c7cc"></div>
<div class="a " style="left:489.20px;top:721.45px;font-size:16px;line-height:16px;color:#4a92dc;transform:scaleX(1.0039);transform-origin:0 0;">Impala HIPAA GDPR Compliance_block operators by query types</div>
<div class="a " style="left:981.90px;top:721.45px;font-size:16px;line-height:16px;color:#464d55;transform:scaleX(1.0295);transform-origin:0 0;">Impala</div>
<div class="a" style="left:1100px;top:711px;width:211px;height:35px;overflow:hidden"><div class="a " style="left:6.50px;top:10.45px;font-size:16px;line-height:16px;color:#1f84d6;transform:scaleX(0.9858);transform-origin:0 0;">Impala@192.168.10.164:210</div></div>
<div class="a " style="left:1338.00px;top:721.45px;font-size:16px;line-height:16px;color:#464d55;transform:scaleX(1.0204);transform-origin:0 0;">Block</div>
<div class="a " style="left:1462.80px;top:721.45px;font-size:16px;line-height:16px;color:#464d55;transform:scaleX(0.9900);transform-origin:0 0;">Query Types</div>
<div class="ln" style="top:781px"></div>
<div class="cb" style="top:754px"></div>
<div class="dot" style="top:759px;background:#c4c7cc"></div>
<div class="a " style="left:489.20px;top:756.45px;font-size:16px;line-height:16px;color:#4a92dc;">Impala HIPAA GDPR Compliance_allow admin select</div>
<div class="a " style="left:981.90px;top:756.45px;font-size:16px;line-height:16px;color:#464d55;transform:scaleX(1.0295);transform-origin:0 0;">Impala</div>
<div class="a" style="left:1100px;top:746px;width:211px;height:35px;overflow:hidden"><div class="a " style="left:6.50px;top:10.45px;font-size:16px;line-height:16px;color:#1f84d6;transform:scaleX(0.9858);transform-origin:0 0;">Impala@192.168.10.164:210</div></div>
<div class="a " style="left:1337.50px;top:756.45px;font-size:16px;line-height:16px;color:#464d55;transform:scaleX(1.0386);transform-origin:0 0;">Allow</div>
<div class="a " style="left:1462.80px;top:756.45px;font-size:16px;line-height:16px;color:#464d55;transform:scaleX(1.0093);transform-origin:0 0;">Object Group</div>
<div class="ln" style="top:816px"></div>
<div class="cb" style="top:789px"></div>
<div class="dot" style="top:794px;background:#c4c7cc"></div>
<div class="a " style="left:489.20px;top:791.45px;font-size:16px;line-height:16px;color:#4a92dc;">Impala HIPAA GDPR Compliance_allow query types</div>
<div class="a " style="left:981.90px;top:791.45px;font-size:16px;line-height:16px;color:#464d55;transform:scaleX(1.0295);transform-origin:0 0;">Impala</div>
<div class="a" style="left:1100px;top:781px;width:211px;height:35px;overflow:hidden"><div class="a " style="left:6.50px;top:10.45px;font-size:16px;line-height:16px;color:#1f84d6;transform:scaleX(0.9858);transform-origin:0 0;">Impala@192.168.10.164:210</div></div>
<div class="a " style="left:1337.50px;top:791.45px;font-size:16px;line-height:16px;color:#464d55;transform:scaleX(1.0386);transform-origin:0 0;">Allow</div>
<div class="a " style="left:1462.80px;top:791.45px;font-size:16px;line-height:16px;color:#464d55;transform:scaleX(0.9900);transform-origin:0 0;">Query Types</div>
<div class="ln" style="top:851px"></div>
<div class="cb" style="top:824px"></div>
<div class="dot" style="top:829px;background:#c4c7cc"></div>
<div class="a " style="left:489.20px;top:826.45px;font-size:16px;line-height:16px;color:#4a92dc;">Impala HIPAA GDPR Compliance_block admins</div>
<div class="a " style="left:981.90px;top:826.45px;font-size:16px;line-height:16px;color:#464d55;transform:scaleX(1.0295);transform-origin:0 0;">Impala</div>
<div class="a" style="left:1100px;top:816px;width:211px;height:35px;overflow:hidden"><div class="a " style="left:6.50px;top:10.45px;font-size:16px;line-height:16px;color:#1f84d6;transform:scaleX(0.9858);transform-origin:0 0;">Impala@192.168.10.164:210</div></div>
<div class="a " style="left:1338.00px;top:826.45px;font-size:16px;line-height:16px;color:#464d55;transform:scaleX(1.0204);transform-origin:0 0;">Block</div>
<div class="a " style="left:1462.80px;top:826.45px;font-size:16px;line-height:16px;color:#464d55;transform:scaleX(1.0093);transform-origin:0 0;">Object Group</div>
<div class="ln" style="top:886px"></div>
<div class="cb" style="top:859px"></div>
<div class="dot" style="top:864px;background:#c4c7cc"></div>
<div class="a " style="left:489.20px;top:861.45px;font-size:16px;line-height:16px;color:#4a92dc;transform:scaleX(1.0051);transform-origin:0 0;">Impala HIPAA GDPR Compliance_allow all for superadmins</div>
<div class="a " style="left:981.90px;top:861.45px;font-size:16px;line-height:16px;color:#464d55;transform:scaleX(1.0295);transform-origin:0 0;">Impala</div>
<div class="a" style="left:1100px;top:851px;width:211px;height:35px;overflow:hidden"><div class="a " style="left:6.50px;top:10.45px;font-size:16px;line-height:16px;color:#1f84d6;transform:scaleX(0.9858);transform-origin:0 0;">Impala@192.168.10.164:210</div></div>
<div class="a " style="left:1337.50px;top:861.45px;font-size:16px;line-height:16px;color:#464d55;transform:scaleX(1.0386);transform-origin:0 0;">Allow</div>
<div class="a " style="left:1462.80px;top:861.45px;font-size:16px;line-height:16px;color:#464d55;transform:scaleX(1.0093);transform-origin:0 0;">Object Group</div>
<div class="cb" style="top:894px"></div>
<div class="a" style="left:1551px;top:402px;width:1px;height:21px;background:#333"></div>
<svg style="position:absolute;left:1410px;top:422px" width="14" height="20" viewBox="0 0 14 20" ><path d="M1 1 L1 16.5 L4.8 12.8 L7.6 19 L10 17.9 L7.3 11.8 L12.5 11.8 Z" fill="#fff" stroke="#222" stroke-width="1" stroke-linejoin="round"/></svg>
<div class="a" style="left:1905px;top:0;width:15px;height:894px;background:#2b2b2b"></div>
<svg style="position:absolute;left:1908px;top:4.5px" width="10" height="8" viewBox="0 0 10 8" ><path d="M5 0.5 L9.5 7.5 L0.5 7.5 Z" fill="#a3a3a3"/></svg>
<div class="a" style="left:1908px;top:94px;width:9px;height:680px;border-radius:5px;background:#a0a0a0"></div>
</body></html>
